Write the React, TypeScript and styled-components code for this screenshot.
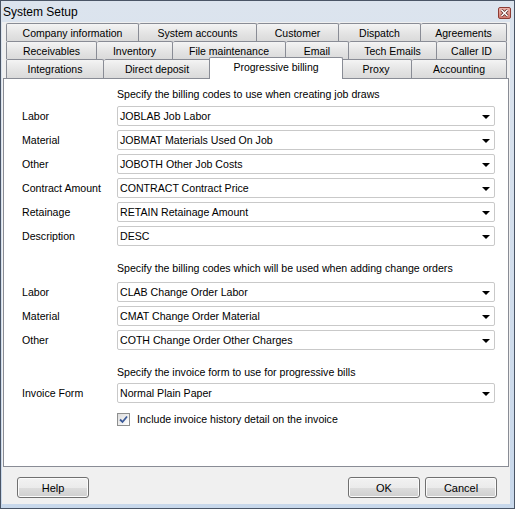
import React from 'react'
import styled, { createGlobalStyle } from 'styled-components'

const GlobalStyle = createGlobalStyle`
  html,
  body {
    margin: 0;
    padding: 0;
    background: #ffffff;
  }

  body {
    font-family: 'Liberation Sans', Arial, sans-serif;
    font-size: 10.6px;
    color: #000000;
  }
`

const Window = styled.div`
  width: 515px;
  height: 509px;
  box-sizing: border-box;
  border: 1px solid #4a5566;
  background: linear-gradient(#dce4ee, #c8d8eb);
  display: flex;
  flex-direction: column;
`

const TitleBar = styled.div`
  height: 21px;
  display: flex;
  align-items: center;
  justify-content: space-between;
  padding: 0 3px 0 2px;
  font-size: 12px;
`

const CloseButton = styled.span`
  width: 13px;
  height: 12px;
  box-sizing: border-box;
  margin-top: 2px;
  border: 1px solid #8d3b33;
  border-radius: 2px;
  background: linear-gradient(#eeb3ab, #d27a70);
  display: flex;
  align-items: center;
  justify-content: center;
`

const Body = styled.div`
  flex: 1;
  margin: 0 4px 4px 1px;
  padding: 1px 1px 0 1px;
  background: #f0f0f0;
  display: flex;
  flex-direction: column;
`

const TabStrip = styled.div`
  margin-left: 3px;
  display: flex;
  flex-direction: column;
`

const TabRow = styled.div<{ $h: number }>`
  display: flex;
  height: ${(p) => p.$h}px;
`

const Tab = styled.div<{ $w: number; $active?: boolean }>`
  width: ${(p) => (p.$active ? p.$w + 4 : p.$w)}px;
  box-sizing: border-box;
  border: 1px solid #898c95;
  border-bottom: none;
  border-left: none;
  border-radius: 2px 2px 0 0;
  background: linear-gradient(#f4f4f4, #e4e4e4 55%, #dadada);
  display: flex;
  justify-content: center;
  align-items: center;
  white-space: nowrap;
  font-size: 10.5px;

  &:first-child {
    border-left: 1px solid #898c95;
  }

  ${(p) =>
    p.$active &&
    `
    position: relative;
    z-index: 1;
    margin: -2px -2px -1px -2px;
    border-left: 1px solid #898c95;
    background: #ffffff;
    align-items: flex-start;
    padding-top: 3px;
  `}
`

const Panel = styled.div`
  height: 389px;
  box-sizing: border-box;
  border: 1px solid #898c95;
  background: #ffffff;
  padding: 8px 0 0 18px;
`

const Section = styled.section`
  display: grid;
  grid-template-columns: 95px 378px;
  row-gap: 4px;

  & + & {
    margin-top: 15px;
  }
`

const Heading = styled.div<{ $space: number }>`
  grid-column: 2;
  line-height: 14px;
  margin-bottom: ${(p) => p.$space}px;
  white-space: nowrap;
`

const Label = styled.div`
  height: 20px;
  display: flex;
  align-items: center;
`

const Select = styled.div`
  height: 20px;
  box-sizing: border-box;
  border: 1px solid #c9c9c9;
  border-radius: 2px;
  background: #ffffff;
  display: flex;
  align-items: center;
  justify-content: space-between;
  padding: 0 4px 0 2px;
`

const Arrow = styled.span`
  width: 0;
  height: 0;
  border-left: 4px solid transparent;
  border-right: 4px solid transparent;
  border-top: 4px solid #000000;
  margin-top: 1px;
`

const CheckRow = styled.label`
  grid-column: 2;
  margin-top: 5px;
  display: flex;
  align-items: center;
  gap: 7px;
  height: 14px;
`

const CheckBox = styled.span`
  width: 13px;
  height: 13px;
  box-sizing: border-box;
  border: 1px solid #8e8f8f;
  background: linear-gradient(135deg, #dcdcdc, #ffffff);
  display: flex;
  align-items: center;
  justify-content: center;
`

const Footer = styled.div`
  flex: 1;
  display: flex;
  align-items: flex-start;
  padding: 10px 12px 0 14px;
`

const Spacer = styled.div`
  flex: 1;
`

const Button = styled.button<{ $gap?: number }>`
  width: 72px;
  height: 21px;
  margin-left: ${(p) => p.$gap ?? 0}px;
  border: 1px solid #707070;
  border-radius: 3px;
  background: linear-gradient(#f2f2f2 0%, #ebebeb 50%, #dddddd 51%, #cfcfcf 100%);
  box-shadow: inset 0 0 0 1px #fbfbfb;
  font-family: 'Liberation Sans', Arial, sans-serif;
  font-size: 11px;
  color: #000000;
  padding: 0;
`

const tabRows = [
  [
    ['Company information', 133],
    ['System accounts', 118],
    ['Customer', 82],
    ['Dispatch', 82],
    ['Agreements', 86],
  ],
  [
    ['Receivables', 91],
    ['Inventory', 76],
    ['File maintenance', 113],
    ['Email', 63],
    ['Tech Emails', 88],
    ['Caller ID', 70],
  ],
  [
    ['Integrations', 98],
    ['Direct deposit', 107],
    ['Progressive billing', 130],
    ['Proxy', 71],
    ['Accounting', 95],
  ],
] as const

const sections = [
  {
    heading: 'Specify the billing codes to use when creating job draws',
    space: 1,
    rows: [
      ['Labor', 'JOBLAB Job Labor'],
      ['Material', 'JOBMAT Materials Used On Job'],
      ['Other', 'JOBOTH Other Job Costs'],
      ['Contract Amount', 'CONTRACT Contract Price'],
      ['Retainage', 'RETAIN Retainage Amount'],
      ['Description', 'DESC'],
    ],
  },
  {
    heading: 'Specify the billing codes which will be used when adding change orders',
    space: 3,
    rows: [
      ['Labor', 'CLAB Change Order Labor'],
      ['Material', 'CMAT Change Order Material'],
      ['Other', 'COTH Change Order Other Charges'],
    ],
  },
  {
    heading: 'Specify the invoice form to use for progressive bills',
    space: 0,
    rows: [['Invoice Form', 'Normal Plain Paper']],
  },
]

export default function App() {
  return (
    <>
      <GlobalStyle />
      <Window>
        <TitleBar>
          <span>System Setup</span>
          <CloseButton>
            <svg width="9" height="8" viewBox="0 0 9 8">
              <path d="M1.5 1 L7.5 7 M7.5 1 L1.5 7" stroke="#5a2520" strokeWidth="3" />
              <path d="M1.5 1 L7.5 7 M7.5 1 L1.5 7" stroke="#ffffff" strokeWidth="1.6" />
            </svg>
          </CloseButton>
        </TitleBar>
        <Body>
          <TabStrip>
            {tabRows.map((row, i) => (
              <TabRow key={i} $h={i === 2 ? 19 : 18}>
                {row.map(([name, w]) => (
                  <Tab key={name} $w={w} $active={name === 'Progressive billing'}>
                    {name}
                  </Tab>
                ))}
              </TabRow>
            ))}
          </TabStrip>
          <Panel>
            {sections.map((s, i) => (
              <Section key={i}>
                <Heading $space={s.space}>{s.heading}</Heading>
                {s.rows.map(([label, value]) => (
                  <React.Fragment key={label}>
                    <Label>{label}</Label>
                    <Select>
                      <span>{value}</span>
                      <Arrow />
                    </Select>
                  </React.Fragment>
                ))}
                {i === 2 && (
                  <CheckRow>
                    <CheckBox>
                      <svg width="9" height="9" viewBox="0 0 9 9">
                        <path d="M1 4.5 L3.5 7 L8 1.5" fill="none" stroke="#3b5a99" strokeWidth="1.8" />
                      </svg>
                    </CheckBox>
                    <span>Include invoice history detail on the invoice</span>
                  </CheckRow>
                )}
              </Section>
            ))}
          </Panel>
          <Footer>
            <Button>Help</Button>
            <Spacer />
            <Button>OK</Button>
            <Button $gap={5}>Cancel</Button>
          </Footer>
        </Body>
      </Window>
    </>
  )
}
